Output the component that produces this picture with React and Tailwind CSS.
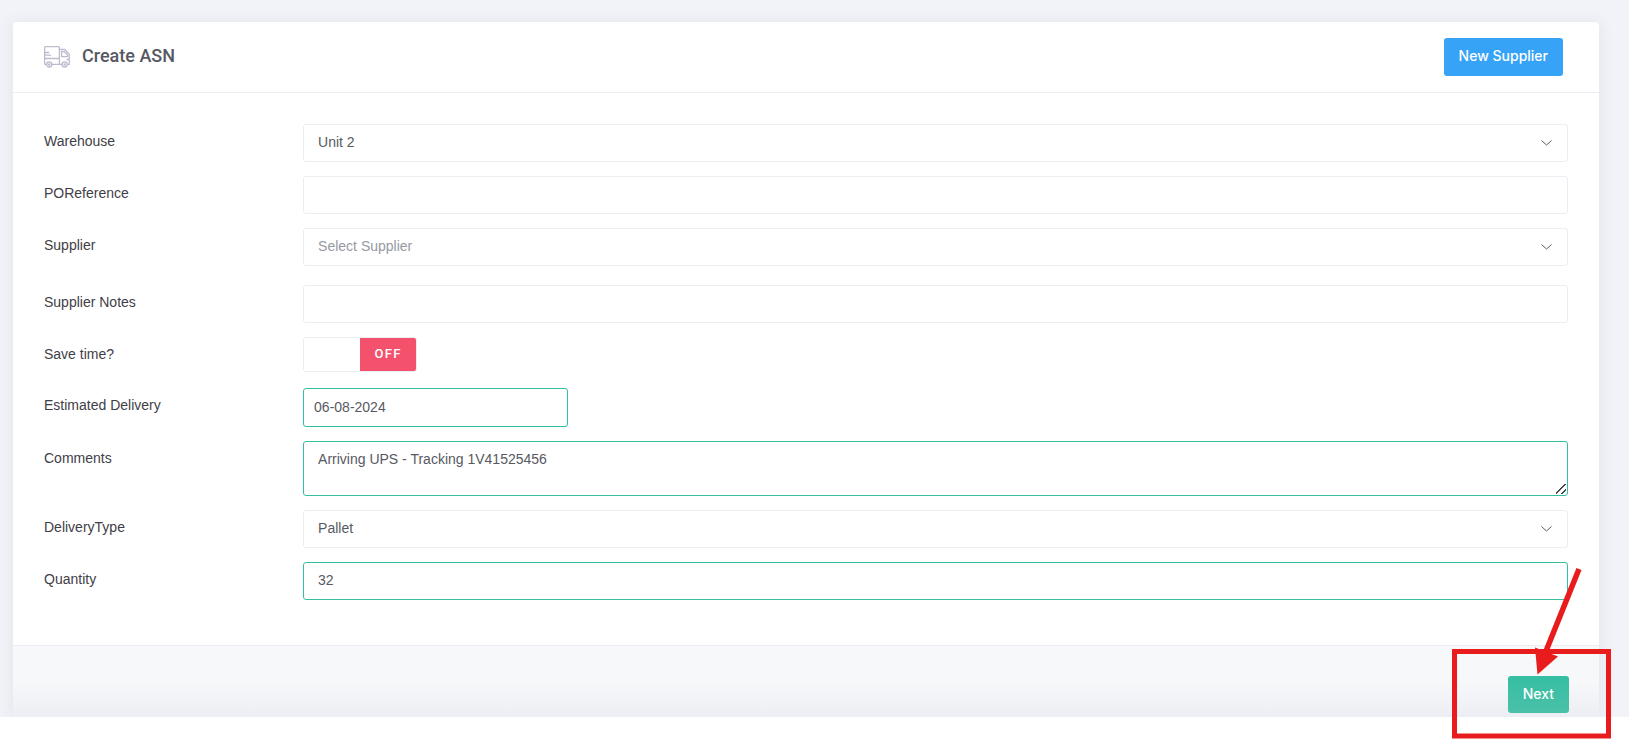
import React, { useState } from 'react';

const inputBase =
  'block w-full h-[38px] rounded-[3px] border bg-white px-[14px] pb-[2px] text-sm outline-none';

const TruckIcon = () => (
  <svg width="26" height="22" viewBox="0 0 26 22" fill="none" stroke="#bdbbcf" strokeWidth="1.3" aria-hidden="true">
    <path d="M2.6 18.4H1.3a.7.7 0 0 1-.7-.7V1.5A.9.9 0 0 1 1.500.6h13a.9.9 0 0 1 .9.9v16.900H7.800" />
    <path d="M15.500 3.500h5.300l4.400 4.800v10.100h-1.900M15.500 18.400h2.500" />
    <path d="M17.600 5.600h2.900l3 3.600v1.500h-5.900zM22.500 13.500h2.700M.6 12.500h14.800M.6 6.500h4.500M.6 9.200h6.500" />
    <circle cx="5.200" cy="18.400" r="2.600" />
    <circle cx="5.200" cy="18.400" r=".6" />
    <circle cx="20.600" cy="18.400" r="2.600" />
    <circle cx="20.600" cy="18.400" r=".6" />
  </svg>
);

const Chevron = () => (
  <svg
    className="h-[6px] w-[11px]"
    viewBox="0 0 11 6"
    fill="none"
    stroke="#575962"
    aria-hidden="true"
  >
    <path d="M.5.5 5.500 5 10.500.5" />
  </svg>
);

function FormRow({ label, htmlFor, children }) {
  return (
    <div className="flex items-start">
      <label htmlFor={htmlFor} className="w-[17%] shrink-0 pt-[7px] text-sm leading-5 text-[#3f4047]">
        {label}
      </label>
      <div className="min-w-0 flex-1">{children}</div>
    </div>
  );
}

function SelectField({ id, value, onChange, options, placeholder }) {
  return (
    <div className="relative">
      <select
        id={id}
        value={value}
        onChange={(e) => onChange(e.target.value)}
        className={`${inputBase} appearance-none border-[#ebedf2] ${value ? 'text-[#575962]' : 'text-[#9699a2]'}`}
      >
        {placeholder && <option value="">{placeholder}</option>}
        {options.map((option) => (
          <option key={option} value={option}>{option}</option>
        ))}
      </select>
      <div className="pointer-events-none absolute inset-y-0 right-4 flex items-center">
        <Chevron />
      </div>
    </div>
  );
}

function App() {
  const [form, setForm] = useState({
    warehouse: 'Unit 2',
    poReference: '',
    supplier: '',
    supplierNotes: '',
    saveTime: false,
    estimatedDelivery: '06-08-2024',
    comments: 'Arriving UPS - Tracking 1V41525456',
    deliveryType: 'Pallet',
    quantity: '32',
  });

  const update = (field) => (value) => setForm((prev) => ({ ...prev, [field]: value }));

  return (
    <div className="relative bg-white pb-[22px] pr-px font-['Liberation_Sans',Arial,sans-serif]">
      <div className="overflow-hidden bg-[#f2f3f8] pl-[13px] pr-[30px] pt-[22px]">
        <main className="rounded-t bg-white shadow-[0_1px_15px_1px_rgba(69,65,78,0.08)]">
          {/* Header */}
          <header className="flex h-[71px] items-center justify-between border-b border-[#ebedf2] pl-[31px] pr-9">
            <div className="flex items-center gap-3">
              <TruckIcon />
              <h1 className="pb-[2px] font-['Roboto',sans-serif] text-lg font-medium text-[#575962]">Create ASN</h1>
            </div>
            <button
              type="button"
              className="h-[38px] rounded-[3px] bg-[#36a3f7] px-[15px] pb-[2px] font-['Inter',sans-serif] text-sm font-medium text-white"
            >
              New Supplier
            </button>
          </header>

          <form onSubmit={(e) => e.preventDefault()}>
            <div className="flex flex-col gap-[14px] px-[31px] pb-[45px] pt-[31px]">
              <FormRow label="Warehouse" htmlFor="warehouse">
                <SelectField id="warehouse" value={form.warehouse} onChange={update('warehouse')} options={['Unit 1', 'Unit 2']} />
              </FormRow>
              <FormRow label="POReference" htmlFor="poReference">
                <input
                  id="poReference"
                  type="text"
                  value={form.poReference}
                  onChange={(e) => update('poReference')(e.target.value)}
                  className={`${inputBase} border-[#ebedf2] text-[#575962]`}
                />
              </FormRow>
              <div className="pb-[5px]">
                <FormRow label="Supplier" htmlFor="supplier">
                  <SelectField id="supplier" value={form.supplier} onChange={update('supplier')} options={[]} placeholder="Select Supplier" />
                </FormRow>
              </div>
              <FormRow label="Supplier Notes" htmlFor="supplierNotes">
                <input
                  id="supplierNotes"
                  type="text"
                  value={form.supplierNotes}
                  onChange={(e) => update('supplierNotes')(e.target.value)}
                  className={`${inputBase} border-[#ebedf2] text-[#575962]`}
                />
              </FormRow>
              <div className="pb-[2px]">
                <FormRow label="Save time?" htmlFor="saveTime">
                  <div className="relative flex h-[35px] w-[114px] overflow-hidden rounded-[3px] border border-[#ebedf2]">
                    <input
                      id="saveTime"
                      type="checkbox"
                      role="switch"
                      checked={form.saveTime}
                      onChange={(e) => update('saveTime')(e.target.checked)}
                      className="peer absolute inset-0 h-full w-full cursor-pointer opacity-0"
                    />
                    <span className="pointer-events-none hidden w-1/2 items-center justify-center bg-[#34bfa3] pb-[2px] font-['Roboto',sans-serif] text-[13px] font-medium tracking-widest text-white peer-checked:flex">
                      ON
                    </span>
                    <span className="pointer-events-none ml-auto flex w-1/2 items-center justify-center bg-[#f4516c] pb-[2px] font-['Roboto',sans-serif] text-[13px] font-medium tracking-widest text-white peer-checked:hidden">
                      OFF
                    </span>
                  </div>
                </FormRow>
              </div>
              <FormRow label="Estimated Delivery" htmlFor="estimatedDelivery">
                <input
                  id="estimatedDelivery"
                  type="text"
                  value={form.estimatedDelivery}
                  onChange={(e) => update('estimatedDelivery')(e.target.value)}
                  className="block h-[39px] w-[265px] rounded-[3px] border border-[#34bfa3] bg-white px-[10px] pb-[2px] text-sm text-[#575962] outline-none"
                />
              </FormRow>
              <FormRow label="Comments" htmlFor="comments">
                <textarea
                  id="comments"
                  value={form.comments}
                  onChange={(e) => update('comments')(e.target.value)}
                  className="block h-[55px] w-full resize-y rounded-[3px] border border-[#34bfa3] bg-white px-[14px] py-[7px] text-sm text-[#575962] outline-none [&::-webkit-resizer]:bg-[linear-gradient(135deg,transparent_44%,#444_44%,#444_54%,transparent_54%,transparent_70%,#444_70%,#444_80%,transparent_80%)] [&::-webkit-resizer]:bg-[length:10px_10px] [&::-webkit-resizer]:bg-[position:4px_4px] [&::-webkit-resizer]:bg-no-repeat"
                />
              </FormRow>
              <FormRow label="DeliveryType" htmlFor="deliveryType">
                <SelectField id="deliveryType" value={form.deliveryType} onChange={update('deliveryType')} options={['Pallet', 'Parcel']} />
              </FormRow>
              <FormRow label="Quantity" htmlFor="quantity">
                <input
                  id="quantity"
                  type="text"
                  value={form.quantity}
                  onChange={(e) => update('quantity')(e.target.value)}
                  className={`${inputBase} border-[#34bfa3] text-[#575962]`}
                />
              </FormRow>
            </div>

            {/* Footer */}
            <footer className="flex justify-end border-t border-[#ebedf2] bg-linear-to-b from-[#f7f8fa] from-50% to-[#edeef3] pb-1 pr-[30px] pt-[30px]">
              <button
                type="submit"
                className="h-[37px] rounded-[3px] bg-linear-to-b from-[#34bfa3] to-[#4bc0a9] px-[15px] pb-[2px] font-['Inter',sans-serif] text-sm font-medium text-white"
              >
                Next
              </button>
            </footer>
          </form>
        </main>
      </div>

      {/* Callout around the Next button */}
      <svg
        className="pointer-events-none absolute bottom-0 right-[19px]"
        width="159"
        height="174"
        viewBox="0 0 159 174"
        fill="none"
        aria-hidden="true"
      >
        <rect x="2.500" y="86.500" width="154" height="84.500" stroke="#e81c1c" strokeWidth="5" />
        <path d="M127 4 94 86" stroke="#e81c1c" strokeWidth="5.500" />
        <path d="M83 82.500 106 91.500 85.500 109.500z" fill="#e81c1c" />
      </svg>
    </div>
  );
}

export default App;
